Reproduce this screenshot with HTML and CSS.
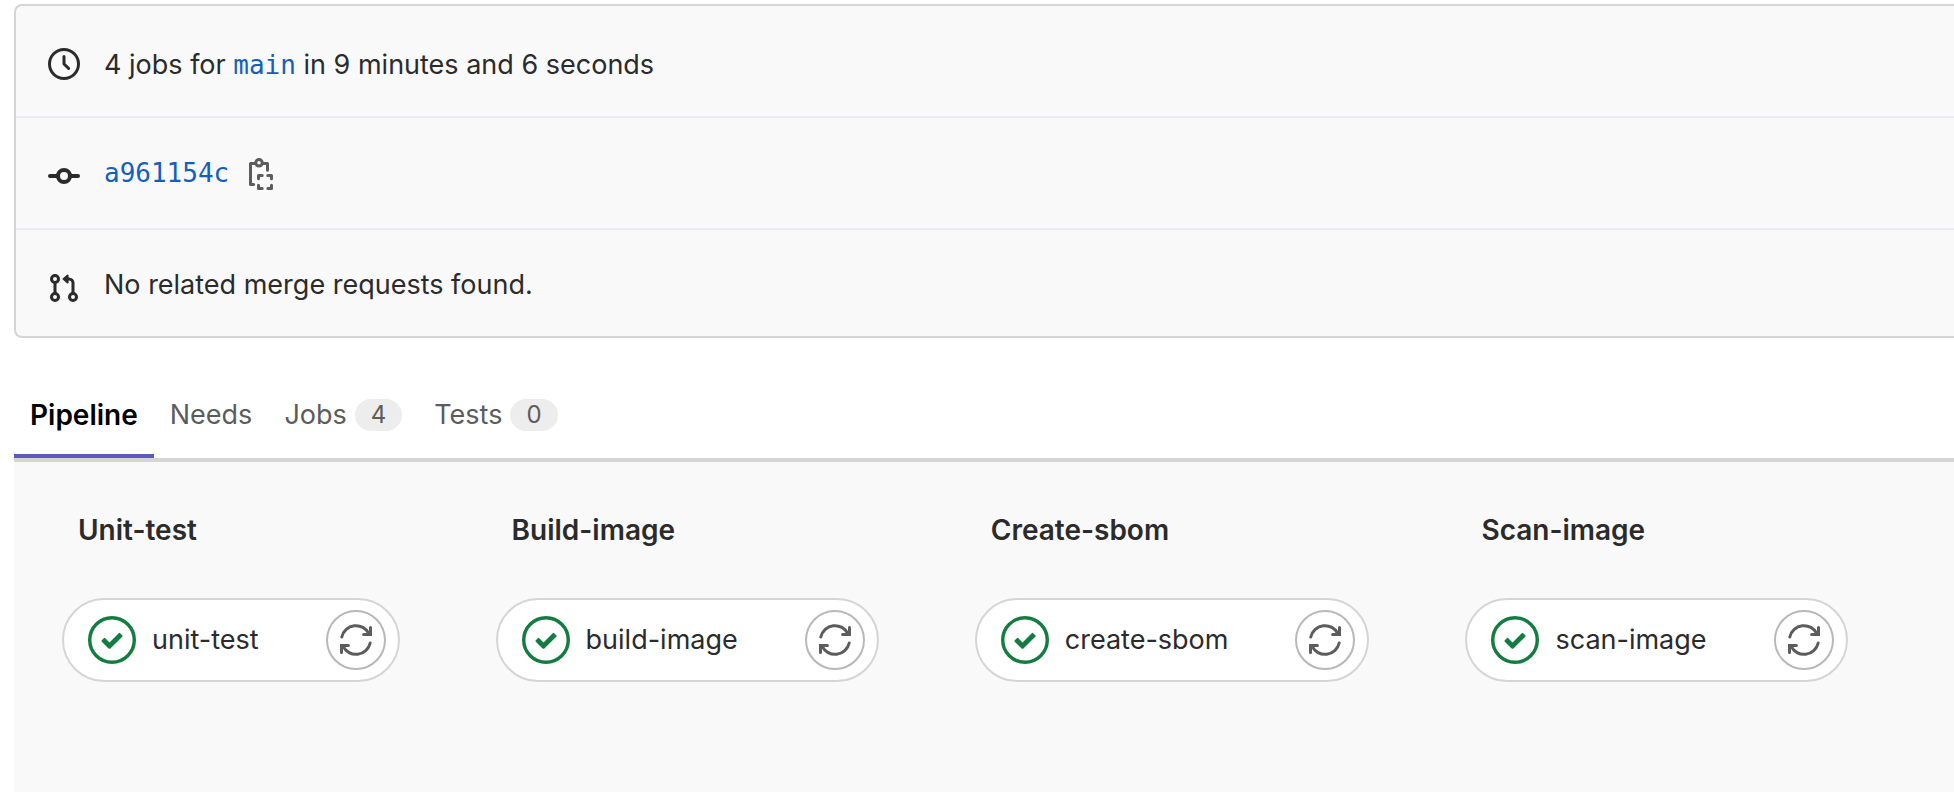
FILE: index.html
```html
<!DOCTYPE html>
<html lang="en">
<head>
<meta charset="utf-8">
<title>Pipeline</title>
<link rel="stylesheet" href="styles.css">
</head>
<body>
<svg class="sprite" aria-hidden="true">
  <symbol id="check" viewBox="0 0 14 14">
    <circle cx="7" cy="7" r="6.5" fill="none" stroke="currentColor"/>
    <path fill="currentColor" d="M6.278 7.697L5.045 6.464a.296.296 0 0 0-.42-.002l-.613.614a.298.298 0 0 0 .002.42l1.91 1.909a.5.5 0 0 0 .703.005l.265-.265L9.997 6.04a.291.291 0 0 0-.009-.408l-.614-.614a.29.29 0 0 0-.408-.009L6.278 7.697z"/>
  </symbol>
  <symbol id="retry" viewBox="0 0 16 16">
    <path fill="none" stroke="currentColor" stroke-width="1.5" stroke-linecap="round" d="M.9 6.5A7.25 7.25 0 0 1 14.5 4.9M15.1 9.5A7.25 7.25 0 0 1 1.5 11.1"/>
    <path fill="none" stroke="currentColor" stroke-width="1.5" stroke-linecap="round" d="M15.25 1.8v3.45H11.8M.75 14.2v-3.45H4.2"/>
  </symbol>
</svg>
<main class="page">
  <section class="info">
    <div class="row">
      <svg class="icon" viewBox="0 0 16 16" aria-hidden="true"><circle cx="8" cy="8" r="7.25" fill="none" stroke="currentColor" stroke-width="1.5"/><path d="M8 4.2V8l2.3 2.2" fill="none" stroke="currentColor" stroke-width="1.5" stroke-linecap="round" stroke-linejoin="round"/></svg>
      <p class="text text-tall">4 jobs for <a class="mono" href="#">main</a> in 9 minutes and 6 seconds</p>
    </div>
    <div class="row">
      <svg class="icon" viewBox="0 0 16 16" aria-hidden="true"><path d="M1 8h4M11 8h4" stroke="currentColor" stroke-width="2" stroke-linecap="round"/><circle cx="8" cy="8" r="3" fill="none" stroke="currentColor" stroke-width="2"/></svg>
      <p class="text"><a class="mono" href="#">a961154c</a></p>
      <button class="copy" type="button" aria-label="Copy commit SHA"><svg class="icon" viewBox="0 0 16 16" aria-hidden="true"><g fill="none" stroke="currentColor" stroke-width="1.5" stroke-linecap="round" stroke-linejoin="round"><path d="M4.3 13.2H2.75V2.75H5M9 2.75h2.25V6.1"/><circle cx="7" cy="2.4" r="1.65"/><path d="M6.75 10.4V8.75H8.6M11.4 8.75h1.85v1.65M13.25 13.6v1.65H11.4M8.6 15.25H6.75V13.6"/></g></svg></button>
    </div>
    <div class="row">
      <svg class="icon" viewBox="0 0 16 16" aria-hidden="true"><g fill="none" stroke="currentColor" stroke-width="1.5"><circle cx="3.5" cy="3.5" r="1.75"/><circle cx="3.5" cy="12.5" r="1.75"/><circle cx="12.5" cy="12.5" r="1.75"/><path d="M3.5 5.25v5.5M12.5 10.75V5.5a2 2 0 0 0-2-2H9"/></g><path fill="currentColor" stroke="currentColor" stroke-linejoin="round" d="M7.8 3.5 9.8 1.8v3.4z"/></svg>
      <p class="text">No related merge requests found.</p>
    </div>
  </section>

  <nav class="tabs">
    <a class="tab tab-active" href="#">Pipeline</a>
    <a class="tab" href="#">Needs</a>
    <a class="tab" href="#">Jobs <span class="badge">4</span></a>
    <a class="tab" href="#">Tests <span class="badge">0</span></a>
  </nav>

  <section class="graph">
    <div class="stage">
      <h2 class="stage-title">Unit-test</h2>
      <div class="job"><svg class="status" aria-hidden="true"><use href="#check"/></svg><a class="job-name" href="#">unit-test</a><button class="retry" type="button" aria-label="Retry unit-test"><svg class="icon" aria-hidden="true"><use href="#retry"/></svg></button></div>
    </div>
    <div class="stage">
      <h2 class="stage-title">Build-image</h2>
      <div class="job"><svg class="status" aria-hidden="true"><use href="#check"/></svg><a class="job-name" href="#">build-image</a><button class="retry" type="button" aria-label="Retry build-image"><svg class="icon" aria-hidden="true"><use href="#retry"/></svg></button></div>
    </div>
    <div class="stage">
      <h2 class="stage-title">Create-sbom</h2>
      <div class="job"><svg class="status" aria-hidden="true"><use href="#check"/></svg><a class="job-name" href="#">create-sbom</a><button class="retry" type="button" aria-label="Retry create-sbom"><svg class="icon" aria-hidden="true"><use href="#retry"/></svg></button></div>
    </div>
    <div class="stage">
      <h2 class="stage-title">Scan-image</h2>
      <div class="job"><svg class="status" aria-hidden="true"><use href="#check"/></svg><a class="job-name" href="#">scan-image</a><button class="retry" type="button" aria-label="Retry scan-image"><svg class="icon" aria-hidden="true"><use href="#retry"/></svg></button></div>
    </div>
  </section>
</main>
</body>
</html>
```
FILE: styles.css
```css
* { box-sizing: border-box; }
body {
  margin: 0;
  background: #fff;
  color: #2b2b2b;
  font-family: Inter, "Liberation Sans", sans-serif;
  font-size: 27px;
  line-height: 40px;
}
a { color: inherit; text-decoration: none; }
button { padding: 0; border: 0; background: none; color: #5c5c5c; cursor: pointer; }
.sprite { position: absolute; width: 0; height: 0; }
.page {
  display: flex;
  flex-direction: column;
  min-height: 100vh;
  padding: 4px 0 0 14px;
}
.icon { display: block; flex: none; width: 32px; height: 32px; }

.info {
  background: #f9f9f9;
  border: 2px solid #d5d5d5;
  border-right: 0;
  border-radius: 8px 0 0 8px;
}
.row {
  display: flex;
  align-items: flex-start;
  padding: 35px 32px 27px;
  border-bottom: 2px solid #ebecef;
}
.row:last-child { border-bottom: 0; padding-bottom: 23px; }
.row > .icon { margin: 7px 24px 9px 0; }
.text { margin: 0; }
.text-tall { line-height: 48px; }
.mono { color: #145fbd; font-family: "DejaVu Sans Mono", monospace; font-size: 26px; }
.copy { margin: 5px 0 0 16px; }

.tabs {
  display: flex;
  margin-top: 40px;
  border-bottom: 4px solid #d5d5d5;
}
.tab {
  display: flex;
  align-items: center;
  gap: 8px;
  padding: 17px 16px 19px;
  border-bottom: 4px solid transparent;
  color: #5c5c5c;
}
.tab-active { border-bottom-color: #5b5bbd; color: #000; font-size: 28px; font-weight: 600; }
.badge {
  padding: 0 16px;
  border-radius: 16px;
  background: #ededed;
  font-size: 24px;
  line-height: 32px;
}

.graph {
  display: flex;
  flex: 1;
  align-items: flex-start;
  gap: 96px;
  padding: 48px;
  background: #f9f9f9;
}
.stage-title {
  margin: 0 0 48px;
  padding: 0 16px;
  font-size: 28px;
  font-weight: 600;
  line-height: 40px;
}
.job {
  display: flex;
  align-items: center;
  padding: 10px 12px 10px 24px;
  background: #fff;
  border: 2px solid #d5d5d5;
  border-radius: 42px;
}
.status { flex: none; width: 48px; height: 48px; margin-right: 16px; color: #137c40; }
.job-name { flex: 1; margin-right: 67px; white-space: nowrap; }
.retry {
  display: grid;
  place-items: center;
  width: 60px;
  height: 60px;
  border: 2px solid #b8b8b8;
  border-radius: 50%;
}
```
